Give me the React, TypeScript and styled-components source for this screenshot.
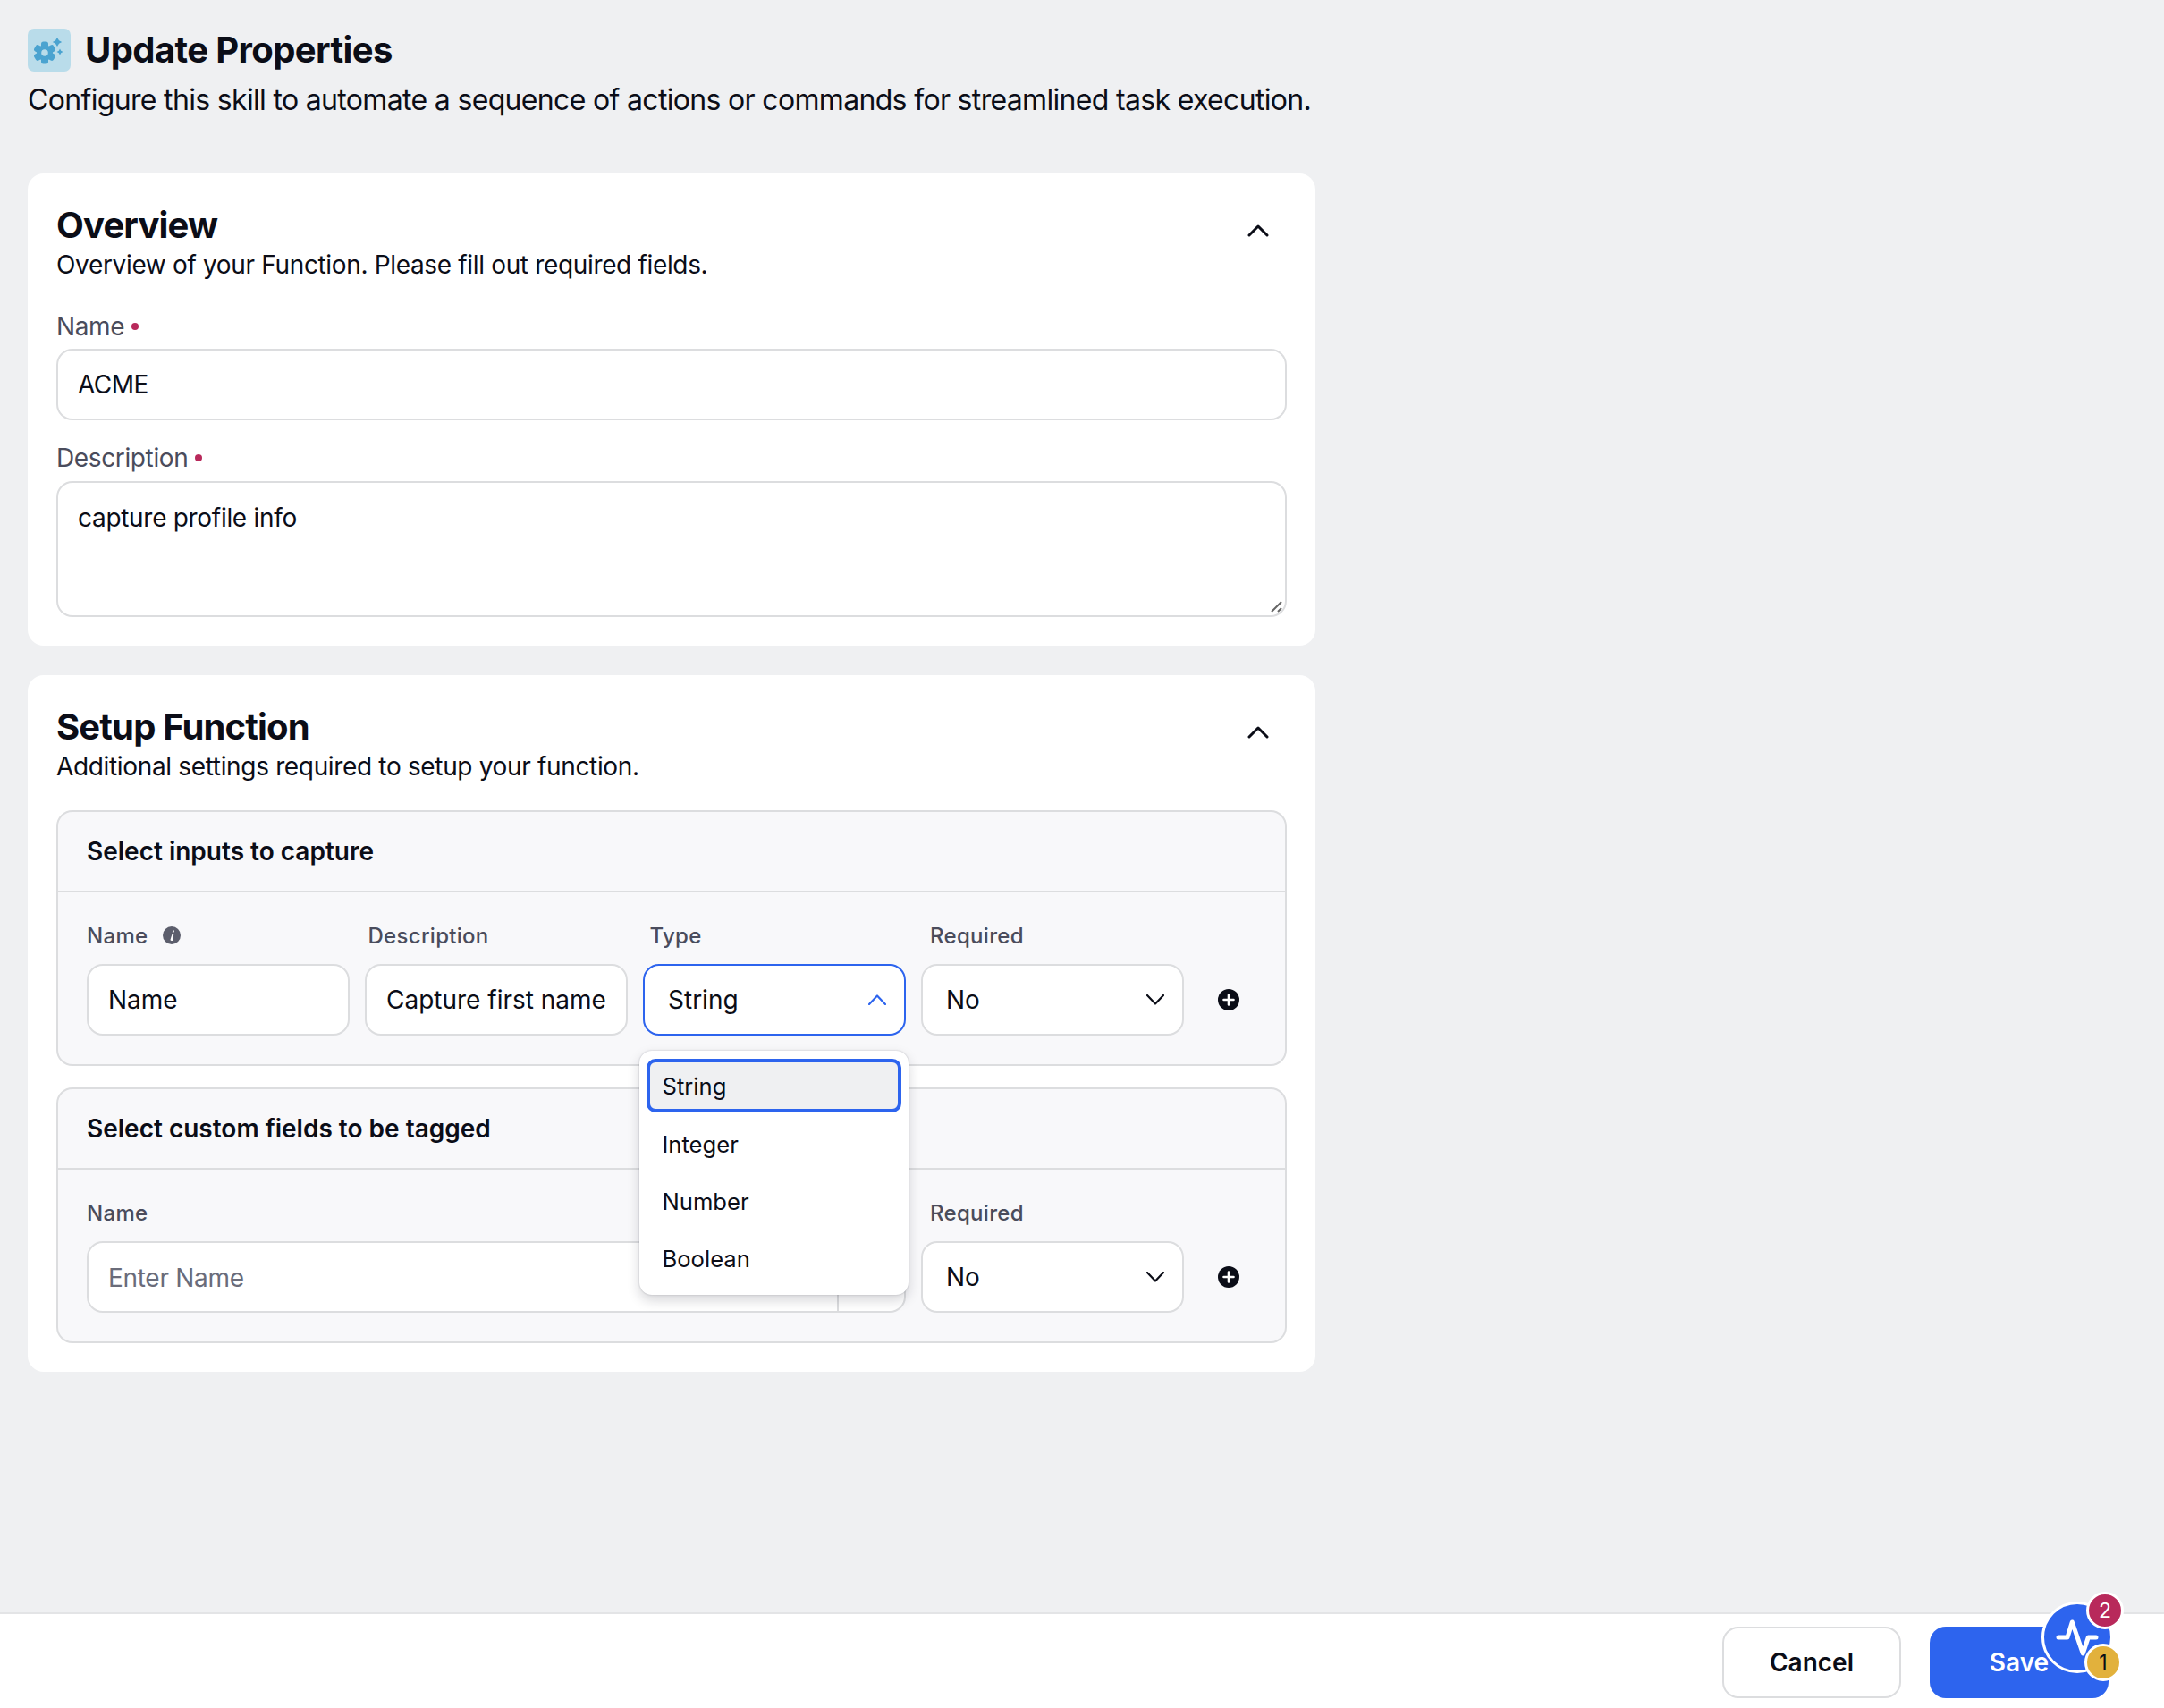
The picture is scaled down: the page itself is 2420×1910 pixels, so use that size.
import React from "react";
import styled, { createGlobalStyle } from "styled-components";

const Global = createGlobalStyle`
  html, body { margin: 0; padding: 0; background: #eff0f2; }
  body { font-family: "Inter", "Liberation Sans", sans-serif; color: #0b0d17; -webkit-font-smoothing: antialiased; }
  * { box-sizing: border-box; }
`;

const Page = styled.div`
  position: relative;
  width: 2420px;
  height: 1910px;
  overflow: hidden;
  background: #eff0f2;
`;

const Content = styled.main`
  position: absolute;
  left: 31px;
  top: 32px;
  width: 1440px;
`;

const TitleRow = styled.div`
  display: flex;
  align-items: center;
  height: 48px;
`;

const Tile = styled.div`
  width: 48px;
  height: 48px;
  border-radius: 7px;
  background: #b9dcea;
  display: flex;
  align-items: center;
  justify-content: center;
  margin-right: 16px;
`;

const Title = styled.h1`
  margin: 0;
  font-size: 40px;
  line-height: 48px;
  font-weight: 700;
  letter-spacing: -0.6px;
`;

const Lead = styled.p`
  margin: 8px 0 0;
  font-size: 32px;
  line-height: 48px;
  font-weight: 400;
  letter-spacing: -0.67px;
  white-space: nowrap;
`;

const Card = styled.section<{ $top: number; $height: number }>`
  position: absolute;
  left: 0;
  top: ${(p) => p.$top}px;
  width: 1440px;
  height: ${(p) => p.$height}px;
  background: #fff;
  border-radius: 18px;
  padding: 0 32px;
`;

const CardHead = styled.div`
  position: relative;
  padding-top: 32px;
`;

const CardTitle = styled.h2`
  margin: 0;
  font-size: 40px;
  line-height: 52px;
  font-weight: 700;
  letter-spacing: -0.85px;
`;

const CardSub = styled.p`
  margin: 0;
  font-size: 28px;
  line-height: 36px;
  letter-spacing: -0.34px;
  white-space: nowrap;
`;

const Collapse = styled.button`
  position: absolute;
  right: 20px;
  top: 57px;
  width: 24px;
  height: 14px;
  border: 0;
  padding: 0;
  background: none;
  display: flex;
`;

const FieldLabel = styled.label<{ $top: number }>`
  display: block;
  margin-top: ${(p) => p.$top}px;
  font-size: 28px;
  line-height: 36px;
  letter-spacing: -0.37px;
  color: #4a4c5c;
`;

const Dot = styled.span`
  display: inline-block;
  width: 8px;
  height: 8px;
  border-radius: 50%;
  background: #b8295b;
  margin-left: 8px;
  vertical-align: 6px;
`;

const WideInput = styled.div`
  height: 80px;
  margin-top: 7px;
  border: 2px solid #dcdddf;
  border-radius: 18px;
  background: #fff;
  display: flex;
  align-items: center;
  padding: 0 22px;
  font-size: 28px;
  letter-spacing: -0.5px;
`;

const Area = styled.div`
  position: relative;
  height: 152px;
  margin-top: 8px;
  border: 2px solid #dcdddf;
  border-radius: 18px;
  background: #fff;
  padding: 21px 22px;
  font-size: 28px;
  line-height: 36px;
  letter-spacing: -0.3px;
`;

const Grip = styled.svg`
  position: absolute;
  right: 0;
  bottom: 0;
`;

const Box = styled.div<{ $top: number }>`
  position: absolute;
  left: 32px;
  top: ${(p) => p.$top}px;
  width: 1376px;
  height: 286px;
  background: #f8f8fa;
  border: 2px solid #dcdddf;
  border-radius: 18px;
`;

const BoxHead = styled.div`
  height: 90px;
  padding: 0 32px;
  display: flex;
  align-items: center;
  border-bottom: 2px solid #dcdddf;
  font-size: 28px;
  font-weight: 600;
`;

const Cols = styled.div`
  display: grid;
  grid-template-columns: repeat(4, 294px);
  column-gap: 17px;
  margin: 30px 0 0 32px;
`;

const ColLabel = styled.div<{ $span?: number; $inset?: number }>`
  grid-column: span ${(p) => p.$span ?? 1};
  padding-left: ${(p) => p.$inset ?? 0}px;
  height: 36px;
  display: flex;
  align-items: center;
  gap: 17px;
  font-size: 24px;
  font-weight: 500;
  letter-spacing: 0.3px;
  color: #4a4c5c;
`;

const Control = styled.div<{ $span?: number; $open?: boolean; $inset?: number }>`
  grid-column: span ${(p) => p.$span ?? 1};
  position: relative;
  height: 80px;
  margin-top: 14px;
  background: #fff;
  border: 2px solid ${(p) => (p.$open ? "#2d64ee" : "#dcdddf")};
  border-radius: 18px;
  display: flex;
  align-items: center;
  justify-content: space-between;
  padding: 0 20px 0 ${(p) => p.$inset ?? 22}px;
  font-size: 28px;
  white-space: nowrap;
`;

const Placeholder = styled.span`
  color: #6a6c7a;
  font-size: 28px;
  letter-spacing: -0.3px;
  padding-top: 2px;
`;

const Addon = styled.span`
  position: absolute;
  right: 73px;
  top: 0;
  bottom: 0;
  width: 2px;
  background: #dcdddf;
`;

const AddButton = styled.svg`
  position: absolute;
  left: 1297px;
  top: 198px;
`;

const Menu = styled.ul`
  position: absolute;
  left: 684px;
  top: 420px;
  width: 301px;
  height: 273px;
  margin: 0;
  padding: 9px 8px;
  list-style: none;
  background: #fff;
  border-radius: 14px;
  box-shadow: 0 0 2px rgba(20, 22, 40, 0.25), 0 6px 14px rgba(20, 22, 40, 0.18);
  z-index: 2;
`;

const Option = styled.li<{ $active?: boolean }>`
  height: ${(p) => (p.$active ? 60 : 64)}px;
  margin-bottom: ${(p) => (p.$active ? 3 : 0)}px;
  display: flex;
  align-items: center;
  padding-left: ${(p) => (p.$active ? 13.5 : 17.5)}px;
  font-size: 25.6px;
  border-radius: 10px;
  background: ${(p) => (p.$active ? "#eff0f2" : "transparent")};
  border: ${(p) => (p.$active ? "4.500px solid #2d64ee" : "0")};
`;

const Footer = styled.footer`
  position: absolute;
  left: 0;
  top: 1803px;
  width: 2420px;
  height: 107px;
  background: #fff;
  border-top: 2px solid #e3e4e6;
`;

const Btn = styled.button<{ $primary?: boolean; $left: number }>`
  position: absolute;
  left: ${(p) => p.$left}px;
  top: 14px;
  width: 200px;
  height: 80px;
  border-radius: 18px;
  border: ${(p) => (p.$primary ? "0" : "2px solid #dcdddf")};
  background: ${(p) => (p.$primary ? "#2d64ee" : "#fff")};
  color: ${(p) => (p.$primary ? "#fff" : "#0b0d17")};
  font: 600 28px "Inter", "Liberation Sans", sans-serif;
`;

const Fab = styled.div`
  position: absolute;
  left: 2283px;
  top: 1791px;
  width: 80px;
  height: 80px;
  border-radius: 50%;
  background: #2d64ee;
  border: 3px solid #fff;
  display: flex;
  align-items: center;
  justify-content: center;
  z-index: 3;
`;

const Badge = styled.div<{ $left: number; $top: number; $bg: string; $fg: string }>`
  position: absolute;
  left: ${(p) => p.$left}px;
  top: ${(p) => p.$top}px;
  width: 42px;
  height: 42px;
  border-radius: 50%;
  border: 3px solid #fff;
  background: ${(p) => p.$bg};
  color: ${(p) => p.$fg};
  display: flex;
  align-items: center;
  justify-content: center;
  font-size: 23px;
  z-index: 4;
`;

const CardChevron = () => (
  <svg width="24" height="14" viewBox="0 0 24 14" fill="none">
    <path d="M2 12 L12 2 L22 12" stroke="#0b0d17" strokeWidth={3} strokeLinecap="round" strokeLinejoin="round" />
  </svg>
);

const SelectChevron = ({ up }: { up?: boolean }) => (
  <svg width="20" height="12" viewBox="0 0 20 12" fill="none">
    <path
      d={up ? "M1 11 L10 1.500 L19 11" : "M1 1 L10 10.500 L19 1"}
      stroke={up ? "#2d64ee" : "#0b0d17"}
      strokeWidth={2.2}
      strokeLinecap="round"
      strokeLinejoin="round"
    />
  </svg>
);

const Plus = () => (
  <AddButton width="24" height="24" viewBox="0 0 24 24">
    <circle cx="12" cy="12" r="12" fill="#0b0d17" />
    <path d="M12 6.500v11M6.500 12h11" stroke="#fff" strokeWidth="2.6" strokeLinecap="round" />
  </AddButton>
);

const Info = () => (
  <svg width="20" height="20" viewBox="0 0 20 20">
    <circle cx="10" cy="10" r="10" fill="#5c5e6c" />
    <path d="M11.200 4.600h1.800l-.4 2h-1.800zM10.600 8.200h1.800l-1.300 6.200c-.1.4 0 .5.5.5l-.2 1H9.600c-.8 0-1.200-.5-1-1.300z" fill="#fff" />
  </svg>
);

const GearSpark = () => (
  <svg width="42" height="42" viewBox="0 0 42 42">
    <g transform="translate(16 24)">
      {[0, 60, 120, 180, 240, 300].map((a) => (
        <rect key={a} x="-4" y="-12.500" width="8" height="7" rx="2.500" fill="#4aa3d0" transform={`rotate(${a})`} />
      ))}
      <circle r="9" fill="#4aa3d0" />
      <circle r="3.800" fill="#b9dcea" />
    </g>
    <path fill="#4aa3d0" d="M30 7l2 3.200 3.200 1.800-3.200 1.800-2 3.200-2-3.200-3.200-1.800 3.200-1.800zM33 19.500l1.200 2.300 2.300 1.200-2.300 1.200-1.200 2.300-1.200-2.300-2.300-1.200 2.300-1.200z" />
  </svg>
);

export default function App() {
  return (
    <Page>
      <Global />
      <Content>
        <TitleRow>
          <Tile><GearSpark /></Tile>
          <Title>Update Properties</Title>
        </TitleRow>
        <Lead>Configure this skill to automate a sequence of actions or commands for streamlined task execution.</Lead>

        <Card $top={162} $height={528}>
          <CardHead>
            <CardTitle>Overview</CardTitle>
            <CardSub>Overview of your Function. Please fill out required fields.</CardSub>
            <Collapse><CardChevron /></Collapse>
          </CardHead>
          <FieldLabel $top={33}>Name<Dot /></FieldLabel>
          <WideInput>ACME</WideInput>
          <FieldLabel $top={24}>Description<Dot /></FieldLabel>
          <Area>
            capture profile info
            <Grip width="20" height="20" viewBox="0 0 20 20">
              <path d="M5 16 L16 5 M12 16 L16 12" stroke="#666" strokeWidth="2" />
            </Grip>
          </Area>
        </Card>

        <Card $top={723} $height={779}>
          <CardHead>
            <CardTitle>Setup Function</CardTitle>
            <CardSub>Additional settings required to setup your function.</CardSub>
            <Collapse><CardChevron /></Collapse>
          </CardHead>
          <Box $top={151}>
            <BoxHead>Select inputs to capture</BoxHead>
            <Cols>
              <ColLabel>Name <Info /></ColLabel>
              <ColLabel $inset={3.5}>Description</ColLabel>
              <ColLabel $inset={7.5}>Type</ColLabel>
              <ColLabel $inset={10}>Required</ColLabel>
              <Control>Name</Control>
              <Control>Capture first name</Control>
              <Control $open $inset={26}>String<SelectChevron up /></Control>
              <Control $inset={26}>No<SelectChevron /></Control>
            </Cols>
            <Plus />
          </Box>
          <Box $top={461}>
            <BoxHead>Select custom fields to be tagged</BoxHead>
            <Cols>
              <ColLabel $span={3}>Name</ColLabel>
              <ColLabel $inset={10}>Required</ColLabel>
              <Control $span={3}><Placeholder>Enter Name</Placeholder><Addon /></Control>
              <Control $inset={26}>No<SelectChevron /></Control>
            </Cols>
            <Plus />
          </Box>
          <Menu>
            <Option $active>String</Option>
            <Option>Integer</Option>
            <Option>Number</Option>
            <Option>Boolean</Option>
          </Menu>
        </Card>
      </Content>

      <Footer>
        <Btn $left={1926}>Cancel</Btn>
        <Btn $left={2158} $primary>Save</Btn>
      </Footer>
      <Fab>
        <svg width="48" height="48" viewBox="0 0 48 48" fill="none">
          <path d="M3 24H13L18.300 7L30.300 42L36.300 24H45" stroke="#fff" strokeWidth="5" strokeLinecap="round" strokeLinejoin="round" />
        </svg>
      </Fab>
      <Badge $left={2333} $top={1780} $bg="#b8295b" $fg="#fff">2</Badge>
      <Badge $left={2331} $top={1838} $bg="#e2b13c" $fg="#0b0d17">1</Badge>
    </Page>
  );
}
